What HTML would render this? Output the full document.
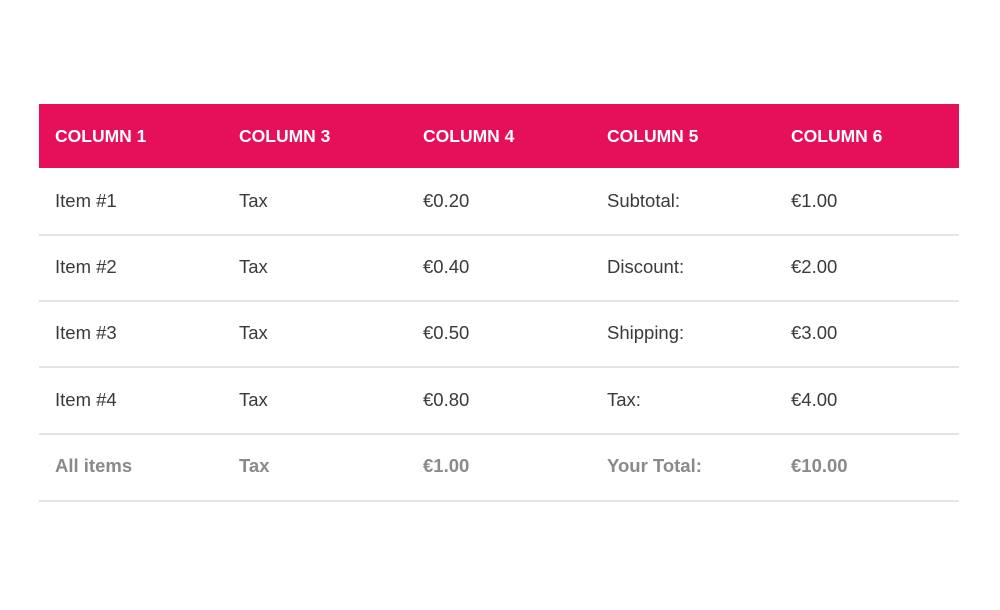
<!DOCTYPE html>
<html><head><style>
body{margin:0;width:1000px;height:610px;background:#fff;font-family:"Liberation Sans",Arial,sans-serif;position:relative;overflow:hidden}
.hd{position:absolute;left:39px;top:104px;width:920px;height:64px;background:#e60f5a}
.r{position:absolute;left:39px;width:920px;border-bottom:2px solid #e4e4e4;box-sizing:border-box}
.c{position:absolute;font-size:18.5px;white-space:nowrap}
.h .c{color:#fff;font-weight:bold;font-size:17.5px}
.b .c{color:#3a3a3a}
.f .c{color:#8a8a8a;font-weight:bold}
</style></head><body>
<div class="hd"></div>
<div class="r h" style="top:104px;height:64px;border:none">
<div class="c" style="left:16px;top:22px">COLUMN 1</div><div class="c" style="left:200px;top:22px">COLUMN 3</div><div class="c" style="left:384px;top:22px">COLUMN 4</div><div class="c" style="left:568px;top:22px">COLUMN 5</div><div class="c" style="left:752px;top:22px">COLUMN 6</div></div>
<div class="r b" style="top:168px;height:68px"><div class="c" style="left:16px;top:22px">Item #1</div><div class="c" style="left:200px;top:22px">Tax</div><div class="c" style="left:384px;top:22px">€0.20</div><div class="c" style="left:568px;top:22px">Subtotal:</div><div class="c" style="left:752px;top:22px">€1.00</div></div>
<div class="r b" style="top:234px;height:68px"><div class="c" style="left:16px;top:22px">Item #2</div><div class="c" style="left:200px;top:22px">Tax</div><div class="c" style="left:384px;top:22px">€0.40</div><div class="c" style="left:568px;top:22px">Discount:</div><div class="c" style="left:752px;top:22px">€2.00</div></div>
<div class="r b" style="top:301px;height:67px"><div class="c" style="left:16px;top:21px">Item #3</div><div class="c" style="left:200px;top:21px">Tax</div><div class="c" style="left:384px;top:21px">€0.50</div><div class="c" style="left:568px;top:21px">Shipping:</div><div class="c" style="left:752px;top:21px">€3.00</div></div>
<div class="r b" style="top:367px;height:68px"><div class="c" style="left:16px;top:22px">Item #4</div><div class="c" style="left:200px;top:22px">Tax</div><div class="c" style="left:384px;top:22px">€0.80</div><div class="c" style="left:568px;top:22px">Tax:</div><div class="c" style="left:752px;top:22px">€4.00</div></div>
<div class="r f" style="top:434px;height:68px"><div class="c" style="left:16px;top:21px">All items</div><div class="c" style="left:200px;top:21px">Tax</div><div class="c" style="left:384px;top:21px">€1.00</div><div class="c" style="left:568px;top:21px">Your Total:</div><div class="c" style="left:752px;top:21px">€10.00</div></div>
</body></html>
